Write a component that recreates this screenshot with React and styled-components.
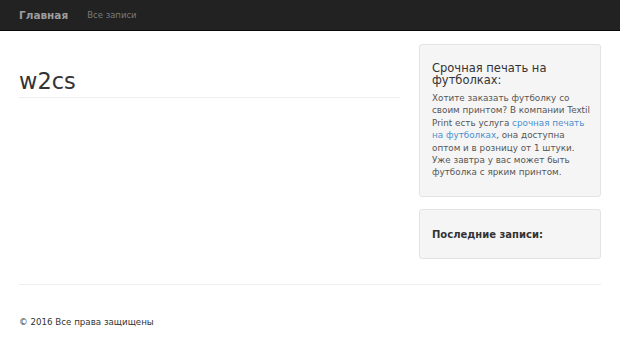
import React from 'react';
import styled, { createGlobalStyle } from 'styled-components';

const GlobalStyle = createGlobalStyle`
  html, body {
    margin: 0;
    padding: 0;
    background: #fff;
    font-family: "DejaVu Sans", Verdana, sans-serif;
    color: #333;
  }
`;

const Navbar = styled.nav`
  display: flex;
  align-items: center;
  height: 31px;
  padding: 0 19px;
  background: #222;
  border-bottom: 1px solid #080808;
  box-sizing: border-box;
`;

const Brand = styled.a`
  font-size: 10.5px;
  font-weight: bold;
  color: #9d9d9d;
  text-decoration: none;
  margin-right: 19px;
`;

const NavLink = styled.a`
  font-size: 8.5px;
  color: #7a7a7a;
  text-decoration: none;
`;

const Container = styled.div`
  padding: 0 19px;
`;

const Row = styled.div`
  display: flex;
  gap: 19px;
  padding-top: 13px;
`;

const Main = styled.main`
  flex: 0 0 381px;
`;

const PageHeader = styled.div`
  padding-top: 24px;
  padding-bottom: 3px;
  border-bottom: 1px solid #eee;
`;

const Title = styled.h1`
  margin: 0;
  font-size: 22.5px;
  font-weight: normal;
  line-height: 26px;
  color: #333;
`;

const Sidebar = styled.aside`
  flex: 1;
  display: flex;
  flex-direction: column;
  gap: 12px;
`;

const Well = styled.div`
  background: #f5f5f5;
  border: 1px solid #e3e3e3;
  border-radius: 3px;
  padding: 12px 6px ${p => (p.$compact ? '13px' : '17px')} 12px;
`;

const WellTitle = styled.h4`
  margin: ${p => (p.$compact ? '7px 0 4px' : '5px 0 6px')};
  font-size: ${p => (p.$compact ? '10px' : '11.5px')};
  font-weight: ${p => (p.$compact ? 'bold' : 'normal')};
  line-height: 12px;
  color: #333;
`;

const Text = styled.p`
  margin: 0;
  font-size: 8.8px;
  line-height: 12.4px;
  white-space: nowrap;
  color: #555;
`;

const TextLink = styled.a`
  color: #4a90d0;
  text-decoration: none;
`;

const Footer = styled.footer`
  margin-top: 25px;
  border-top: 1px solid #eee;
  padding: 31px 0 10px;
`;

const Copy = styled.p`
  margin: 0;
  font-size: 8.7px;
  line-height: 12px;
  color: #333;
`;

export default function App() {
  return (
    <>
      <GlobalStyle />
      <Navbar>
        <Brand href="#">Главная</Brand>
        <NavLink href="#">Все записи</NavLink>
      </Navbar>
      <Container>
        <Row>
          <Main>
            <PageHeader>
              <Title>w2cs</Title>
            </PageHeader>
          </Main>
          <Sidebar>
            <Well>
              <WellTitle>Срочная печать на футболках:</WellTitle>
              <Text>
                Хотите заказать футболку со<br />
                своим принтом? В компании Textil<br />
                Print есть услуга <TextLink href="#">срочная печать<br />
                на футболках</TextLink>, она доступна<br />
                оптом и в розницу от 1 штуки.<br />
                Уже завтра у вас может быть<br />
                футболка с ярким принтом.
              </Text>
            </Well>
            <Well $compact>
              <WellTitle $compact>Последние записи:</WellTitle>
            </Well>
          </Sidebar>
        </Row>
        <Footer>
          <Copy>© 2016 Все права защищены</Copy>
        </Footer>
      </Container>
    </>
  );
}
